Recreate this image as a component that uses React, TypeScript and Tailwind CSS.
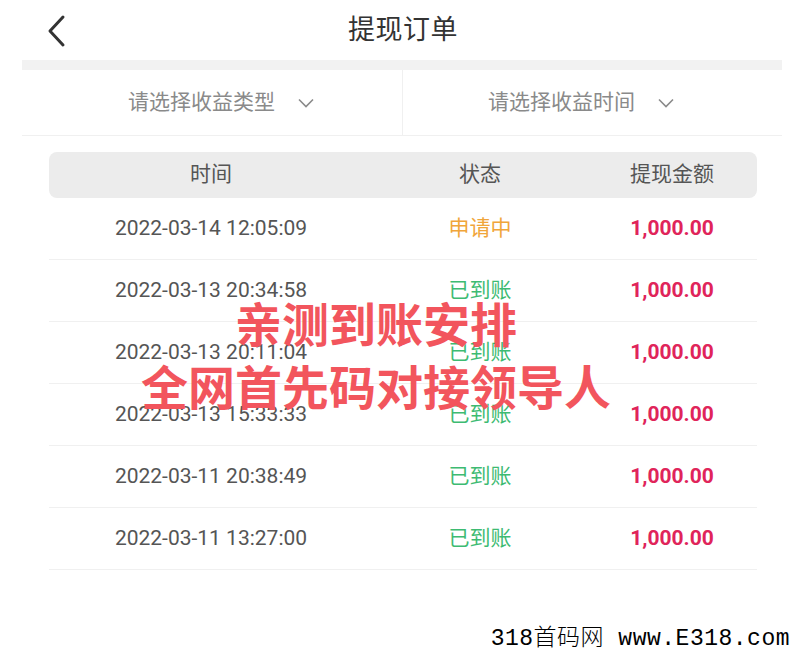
import React from 'react';

type Order = { time: string; status: 'pending' | 'done'; amount: string };

const orders: Order[] = [
  { time: '2022-03-14 12:05:09', status: 'pending', amount: '1,000.00' },
  { time: '2022-03-13 20:34:58', status: 'done', amount: '1,000.00' },
  { time: '2022-03-13 20:11:04', status: 'done', amount: '1,000.00' },
  { time: '2022-03-13 15:33:33', status: 'done', amount: '1,000.00' },
  { time: '2022-03-11 20:38:49', status: 'done', amount: '1,000.00' },
  { time: '2022-03-11 13:27:00', status: 'done', amount: '1,000.00' },
];

const Chevron = () => (
  <svg className="w-[18px] h-[12px] text-[#8a8a8a]" viewBox="0 0 18 12" fill="none" stroke="currentColor" strokeWidth="1.6">
    <path d="M2 2.5l7 7 7-7" />
  </svg>
);

const App: React.FC = () => {
  return (
    <div className="relative w-[794px] h-[656px] bg-white overflow-hidden" style={{ fontFamily: 'Roboto, "Noto Sans CJK SC", sans-serif' }}>
      <div className="relative h-[60px] flex items-center justify-center pl-[12px]">
        <svg className="absolute left-[46px] top-[14px] w-[22px] h-[34px] text-[#333]" viewBox="0 0 22 34" fill="none" stroke="currentColor" strokeWidth="3" strokeLinecap="round" strokeLinejoin="round">
          <path d="M17 3L4 17l13 14" />
        </svg>
        <h1 className="text-[27px] text-[#333] tracking-[0.5px]">提现订单</h1>
      </div>

      <div className="ml-[22px] w-[760px] h-[10px] bg-[#f2f2f2]" />

      <div className="ml-[22px] w-[760px] h-[66px] flex border-b border-[#f0f0f0]">
        <div className="w-[381px] shrink-0 flex items-center gap-[22px] border-r border-[#f0f0f0] pl-[106px]">
          <span className="text-[21px] text-[#8a8a8a]">请选择收益类型</span>
          <Chevron />
        </div>
        <div className="flex-1 flex items-center gap-[22px] pl-[85px]">
          <span className="text-[21px] text-[#8a8a8a]">请选择收益时间</span>
          <Chevron />
        </div>
      </div>

      <div className="ml-[49px] w-[708px] mt-[16px]">
        <div className="h-[46px] rounded-[8px] bg-[#ececec] grid grid-cols-[324px_214px_170px] items-center text-[21px] text-[#555]">
          <span className="text-center">时间</span>
          <span className="text-center">状态</span>
          <span className="text-center">提现金额</span>
        </div>
        {orders.map((o, i) => (
          <div key={i} className="h-[62px] grid grid-cols-[324px_214px_170px] items-center border-b border-[#f0f0f0]">
            <span className="text-center text-[21px] text-[#555]">{o.time}</span>
            <span className={`text-center text-[21px] ${o.status === 'pending' ? 'text-[#f0a53a]' : 'text-[#3dbb72]'}`}>
              {o.status === 'pending' ? '申请中' : '已到账'}
            </span>
            <span className="text-center text-[21px] font-bold text-[#e0245a]">{o.amount}</span>
          </div>
        ))}
      </div>

      <div className="absolute left-0 right-0 top-[290px] pr-[42px] flex flex-col items-center text-[#f2555d] font-bold leading-[63px] text-[47px]" style={{ fontFamily: '"Noto Sans CJK SC", sans-serif' }}>
        <span>亲测到账安排</span>
        <span>全网首先码对接领导人</span>
      </div>

      <div className="absolute right-[4px] top-[622px] text-[23px] tracking-[0.5px] font-light text-black" style={{ fontFamily: '"Liberation Mono", "Noto Sans CJK SC", monospace' }}>
        318首码网 www.E318.com
      </div>
    </div>
  );
};

export default App;
